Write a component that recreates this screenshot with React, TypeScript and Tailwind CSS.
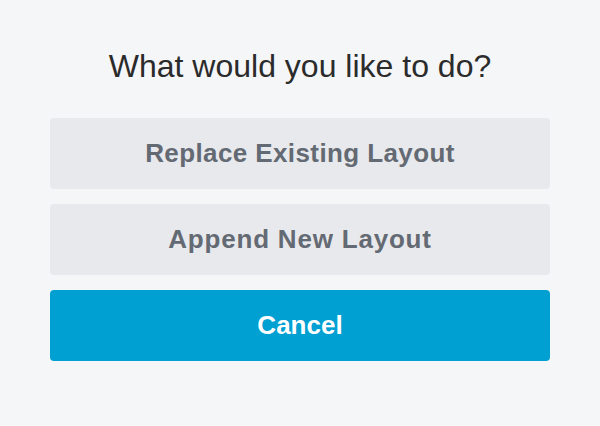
import React from "react";

export default function App() {
  return (
    <div className="w-[600px] h-[426px] bg-[#f5f6f8] flex flex-col items-center pt-[46px] px-[50px]" style={{ fontFamily: '"Liberation Sans", Arial, sans-serif' }}>
      <h1 className="text-[32px] leading-[40px] text-[#2b2b2b] font-normal mb-[32px]">What would you like to do?</h1>
      <div className="w-full flex flex-col gap-[15px]">
        <button className="h-[71px] w-full rounded-[4px] bg-[#e8e9ec] text-[#646a73] text-[26px] font-bold tracking-[0.4px]">Replace Existing Layout</button>
        <button className="h-[71px] w-full rounded-[4px] bg-[#e8e9ec] text-[#646a73] text-[26px] font-bold tracking-[0.8px]">Append New Layout</button>
        <button className="h-[71px] w-full rounded-[4px] bg-[#00a0d2] text-white text-[26px] font-bold">Cancel</button>
      </div>
    </div>
  );
}
